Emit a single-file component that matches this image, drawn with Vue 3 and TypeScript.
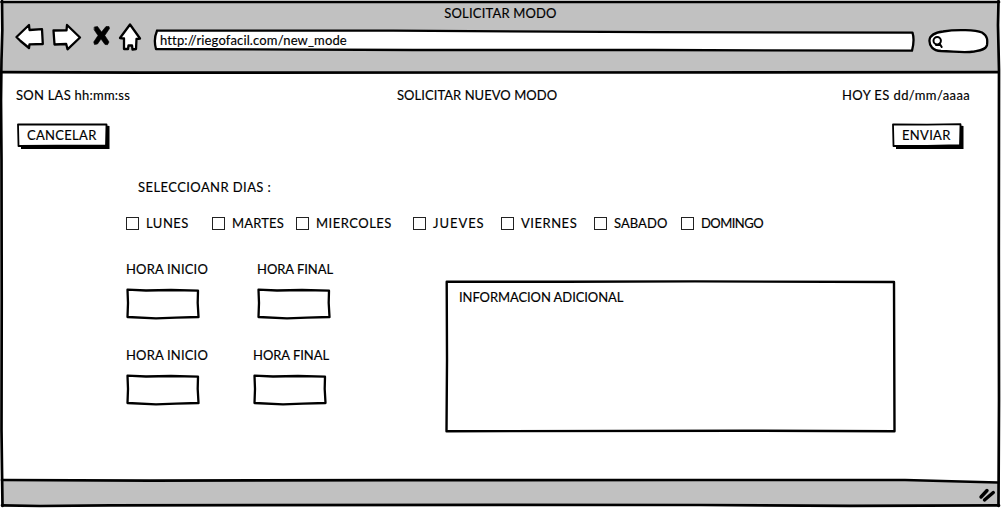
<script setup lang="ts">
interface Slot {
  id: number
  start: string
  end: string
}

const days: string[] = ['LUNES', 'MARTES', 'MIERCOLES', 'JUEVES', 'VIERNES', 'SABADO', 'DOMINGO']
const slots: Slot[] = [
  { id: 1, start: 'HORA INICIO', end: 'HORA FINAL' },
  { id: 2, start: 'HORA INICIO', end: 'HORA FINAL' },
]
</script>

<template>
  <div class="window">
    <svg class="sketch" viewBox="0 0 1001 508" aria-hidden="true">
      <path class="chrome" d="M3 2H998V73H3ZM3 480.500L230 481 450 480.500 650 480 910 480 998 482.500V505.500L110 505.800 3 505.200Z" />
      <path class="edge" d="M1.500 2H999" />
      <path class="edge" d="M2 1L2.300 30 1.500 60 1 100 1.500 160 1.700 300 1.500 430 2 470 2.500 506" />
      <path class="edge" d="M998.500 1L998 25 999 70 998.800 250 999 400 998.500 506" />
      <path class="edge" d="M2 72.200L140 72.700 540 72.500 998 72.200" />
      <path class="edge" d="M2 480L150 480.600 400 480.200 700 480 905 480 998 482.500" />
      <path class="edge" d="M2 505.300L40 506 110 505.300 500 504.900 700 505 850 505.800 999 505.400" />
      <path class="grip" d="M981 497L987 490.500M984.500 500L993.300 492.500" />
    </svg>

    <header class="bar">
      <div class="title t-title">SOLICITAR MODO</div>
      <div class="tools">
        <svg class="nav" viewBox="0 0 130 36" aria-hidden="true">
          <path class="icon" d="M1.500 17L14 5 14.500 10 27 9.200 27.800 24 14.500 24.300 14 28 5.500 21Z" />
          <path class="icon" d="M38.500 10.500L51.500 10.300 52 5 65 17.500 52.500 29.300 51.200 24 39.500 24.500Z" />
          <path class="cross" d="M79.500 7L82.500 6.500 86.500 12 91 6.500 94 6.500 94.500 8.500 89.800 15.500 94 22 92.500 24.700 90 24.500 86 19 82.500 24 79.500 24.500 78.700 22 83 15.500 79.300 10Z" />
          <path class="icon" d="M115 4.500L125 18.500 121.500 19 121 29 117.500 29.500 117 25.500 113.500 25.500 113 29 109 29 109 18.500 105 18Z" />
        </svg>
        <div class="address">
          <svg class="sketch" viewBox="0 0 762 24" aria-hidden="true">
            <path class="field" d="M4 1.700L240 1.700 500 3.200 759.500 3.700C761.500 10 760.500 16 759 21.700L500 21 260 21 3 20C1.300 14 1.300 8 4 1.700" />
          </svg>
          <span class="t-url">http://riegofacil.com/new_mode</span>
        </div>
        <svg class="search" viewBox="0 0 62 26" aria-hidden="true">
          <path class="field" d="M15 3.500C29 1 48 2 54 4.500C60 8 59.500 13 59 17C58 22 51 22.500 46 23.500C36 25 28 23.500 13 23C5 22.500 1 18 1.500 12C2 7 8 4.500 15 3.500Z" />
          <circle class="lens" cx="9.200" cy="12.800" r="3.700" />
          <path class="lens" d="M8 17H12.500M11.500 15.500L13.700 19" />
        </svg>
      </div>
    </header>

    <main class="page">
      <div class="status">
        <span class="t-now">SON LAS hh:mm:ss</span>
        <h1 class="t-head">SOLICITAR NUEVO MODO</h1>
        <span class="t-date">HOY ES dd/mm/aaaa</span>
      </div>

      <div class="actions">
        <button class="btn cancel" type="button">
          <svg class="sketch" viewBox="0 0 93 26" aria-hidden="true">
            <path class="shade" d="M4 23H89V2.500L92.500 3V26H4Z" />
            <path class="thin" d="M1 1.300L40 1.500 89.500 1.300 89 22.700 40 22.700 1.500 23Z" />
          </svg>
          <span>CANCELAR</span>
        </button>
        <button class="btn send" type="button">
          <svg class="sketch" viewBox="0 0 72 26" aria-hidden="true">
            <path class="shade" d="M4 23H68V2.500L71.500 3V26H4Z" />
            <path class="thin" d="M1 1.500L35 1.600 68.500 1.200 68 22.200 35 22.800 1.500 23Z" />
          </svg>
          <span>ENVIAR</span>
        </button>
      </div>

      <h2 class="prompt t-prompt">SELECCIOANR DIAS :</h2>

      <div class="days">
        <label v-for="day in days" :key="day" class="day">
          <span class="box"></span>
          <span :class="'t-' + day.toLowerCase()">{{ day }}</span>
        </label>
      </div>

      <div class="details">
        <div class="slots">
          <div v-for="slot in slots" :key="slot.id" class="slot" :class="'slot-' + slot.id">
            <div v-for="name in [slot.start, slot.end]" :key="name" class="time">
              <span :class="name === slot.start ? 't-start' : 't-end'">{{ name }}</span>
              <svg class="entry" viewBox="0 0 75 32" aria-hidden="true">
                <path class="field" d="M1.500 1.700L20 2.500 45 2 72 2.700 71.700 15 72.500 29 50 29.600 30 30.300 1.500 29 2 15Z" />
              </svg>
            </div>
          </div>
        </div>
        <div class="info">
          <svg class="sketch" viewBox="0 0 451 153" aria-hidden="true">
            <path class="line" d="M1.700 1.700L120 1.800 250 1.400 449 2 449.500 151.300 300 150.700 1.500 151.200 2 80Z" />
          </svg>
          <span class="t-info">INFORMACION ADICIONAL</span>
        </div>
      </div>
    </main>
  </div>
</template>

<style>
body {
  margin: 0;
  background: #fff;
}
</style>

<style scoped>
.window {
  position: relative;
  box-sizing: border-box;
  width: 1001px;
  height: 508px;
  overflow: hidden;
  background: #fff;
  color: #000;
  font: 13px/18px Lato, "Liberation Sans", sans-serif;
  letter-spacing: 0.3px;
  white-space: nowrap;
  -webkit-text-stroke: 0.15px #000;
}
.sketch {
  position: absolute;
  inset: 0;
  width: 100%;
  height: 100%;
}
svg { display: block; fill: none; stroke-linejoin: round; stroke-linecap: round; }
.sketch + span { position: relative; }
.chrome { fill: #c1c1c1; }
.edge { stroke: #000; stroke-width: 2.7; }
.grip { stroke: #000; stroke-width: 3.4; }
.icon { fill: #fff; stroke: #000; stroke-width: 2.3; }
.cross { fill: #000; stroke: #000; stroke-width: 0.6; }
.field { fill: #fff; stroke: #000; stroke-width: 2.3; }
.line { fill: #fff; stroke: #000; stroke-width: 2.4; }
.thin { fill: #fff; stroke: #000; stroke-width: 1.8; }
.shade { fill: #000; }
.lens { stroke: #000; stroke-width: 2; }

.t-title { letter-spacing: 0.18px; }
.t-url { letter-spacing: 0.14px; }
.t-now { letter-spacing: 0.24px; }
.t-head { letter-spacing: 0.05px; }
.t-date { letter-spacing: 0.4px; }
.t-prompt { letter-spacing: 0.42px; }
.t-lunes { letter-spacing: 0.5px; }
.t-martes { letter-spacing: 0.15px; }
.t-miercoles { letter-spacing: 0.5px; }
.t-jueves { letter-spacing: 0.95px; }
.t-viernes { letter-spacing: 0.52px; }
.t-sabado { letter-spacing: 0.05px; }
.t-domingo { letter-spacing: -0.55px; }
.t-start { letter-spacing: 0.17px; }
.t-end { letter-spacing: -0.05px; }
.t-info { letter-spacing: -0.08px; }

.bar { position: relative; height: 73px; }
.title { padding-top: 4px; text-align: center; }
.tools { display: flex; align-items: flex-start; padding-left: 15px; }
.nav { width: 130px; height: 36px; margin-right: 8px; margin-top: -2px; }
.address {
  position: relative;
  box-sizing: border-box;
  width: 762px;
  height: 24px;
  margin-top: 7px;
  padding: 2px 0 0 7px;
}
.search { width: 62px; height: 26px; margin: 6px 0 0 13px; }

.page { position: relative; }
.status {
  display: grid;
  grid-template-columns: 381px 445px 1fr;
  padding: 13px 0 0 16px;
}
h1, h2 { margin: 0; font: inherit; }
.actions {
  display: flex;
  justify-content: space-between;
  padding: 19px 37px 0 17px;
}
.btn {
  position: relative;
  height: 26px;
  padding: 0 0 2px 10px;
  border: 0;
  background: none;
  color: inherit;
  font: inherit;
  letter-spacing: inherit;
  text-align: left;
}
.cancel { width: 93px; }
.send { width: 72px; }
.prompt { padding: 29px 0 0 138px; }
.days {
  display: grid;
  grid-template-columns: 86px 84px 117px 88px 93px 87px 100px;
  margin: 18px 0 0 126px;
}
.day { display: flex; align-items: center; gap: 7px; }
.box { width: 11px; height: 11px; border: 1px solid #222; background: #fff; }
.details { display: flex; padding-left: 126px; margin-top: 28px; }
.slots { width: 319px; }
.slot { display: flex; height: 86px; }
.slot-1 .time { width: 131px; }
.slot-2 .time { width: 127px; }
.entry { width: 75px; height: 32px; margin-top: 10px; }
.info {
  position: relative;
  box-sizing: border-box;
  width: 451px;
  height: 153px;
  margin-top: 20px;
  padding: 8px 14px;
}
</style>
